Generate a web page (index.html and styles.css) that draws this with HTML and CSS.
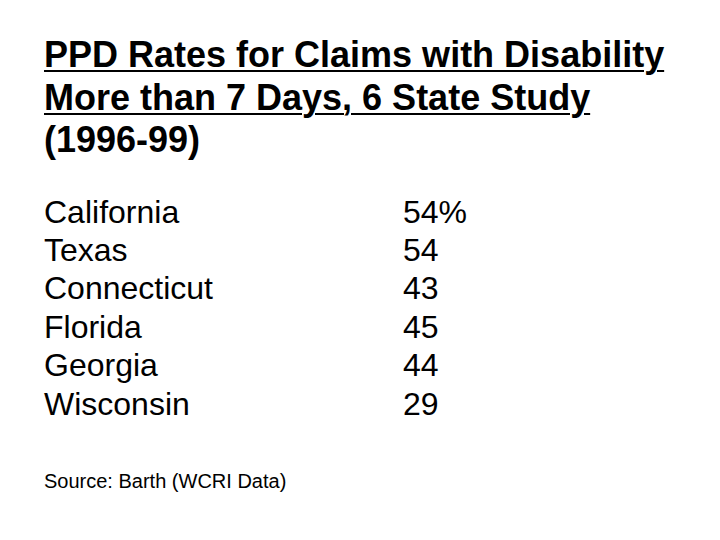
FILE: index.html
```html
<!DOCTYPE html>
<html>
<head>
<meta charset="utf-8">
<link rel="stylesheet" href="styles.css">
</head>
<body>
<div class="slide">
  <h1 class="title"><span class="ul">PPD Rates for Claims with Disability<br>More than 7 Days, 6 State Study</span><br>(1996-99)</h1>
  <div class="table">
    <div class="col names">
      <div>California</div>
      <div>Texas</div>
      <div>Connecticut</div>
      <div>Florida</div>
      <div>Georgia</div>
      <div>Wisconsin</div>
    </div>
    <div class="col values">
      <div>54%</div>
      <div>54</div>
      <div>43</div>
      <div>45</div>
      <div>44</div>
      <div>29</div>
    </div>
  </div>
  <div class="source">Source: Barth (WCRI Data)</div>
</div>
</body>
</html>
```
FILE: styles.css
```css
html, body {
  margin: 0;
  padding: 0;
  background: #fff;
}
.slide {
  width: 720px;
  height: 540px;
  box-sizing: border-box;
  padding: 34px 0 0 44px;
  font-family: "Liberation Sans", Arial, sans-serif;
  color: #000;
}
.title {
  margin: 0;
  font-size: 36px;
  font-weight: bold;
  line-height: 42.5px;
}
.ul {
  text-decoration: underline;
  text-decoration-thickness: 2px;
  text-underline-offset: 3px;
}
.table {
  display: flex;
  margin-top: 31px;
  font-size: 32px;
  line-height: 38.4px;
}
.names {
  width: 359px;
}
.source {
  margin-top: 46px;
  font-size: 20px;
  line-height: 24px;
}
```
